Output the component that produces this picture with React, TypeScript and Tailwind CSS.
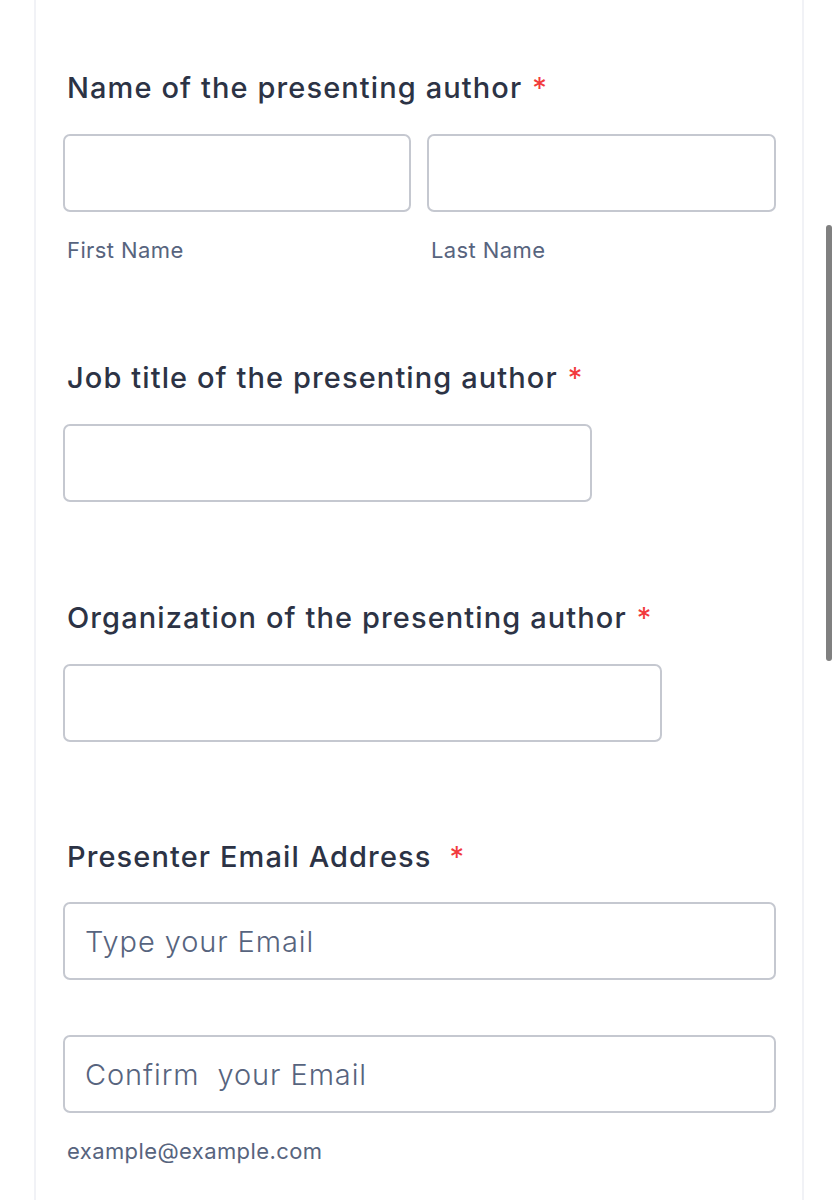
import React from "react";

const font = { fontFamily: "Inter, 'Noto Sans', sans-serif" };

function Label({ text, gap = "ml-[10px]" }: { text: string; gap?: string }) {
  return (
    <div className="pl-[4px] text-[29px] leading-[36px] text-[#2c3345] font-medium tracking-[1.1px]">
      {text}
      <span className={`${gap} text-[#f23a3c] font-normal`}>*</span>
    </div>
  );
}

function Input({ w, placeholder }: { w: string; placeholder?: string }) {
  return (
    <input
      placeholder={placeholder}
      className={`${w} h-[78px] border-2 border-[#c5c8d0] rounded-[7px] bg-white px-[20px] text-[29px] font-light tracking-[0.9px] text-[#2c3345] placeholder:text-[#57647e] outline-none`}
      style={font}
    />
  );
}

function Sub({ text, className = "" }: { text: string; className?: string }) {
  return (
    <div className={`pl-[4px] text-[22px] leading-[26px] tracking-[0.4px] text-[#57647e] ${className}`}>{text}</div>
  );
}

export default function App() {
  return (
    <div className="w-[838px] h-[1200px] bg-white overflow-hidden relative" style={font}>
      <div className="ml-[34px] w-[770px] h-[1200px] border-x-2 border-[#f1f2f6] bg-white">
        <div className="pl-[27px]">
          <div className="pt-[70px]">
            <Label text="Name of the presenting author" />
            <div className="mt-[28px] flex gap-[16px]">
              <div className="flex flex-col">
                <Input w="w-[348px]" />
                <Sub text="First Name" className="mt-[25px]" />
              </div>
              <div className="flex flex-col">
                <Input w="w-[349px]" />
                <Sub text="Last Name" className="mt-[25px]" />
              </div>
            </div>
          </div>
          <div className="pt-[97px]">
            <Label text="Job title of the presenting author" />
            <div className="mt-[28px]">
              <Input w="w-[529px]" />
            </div>
          </div>
          <div className="pt-[98px]">
            <Label text="Organization of the presenting author" />
            <div className="mt-[28px]">
              <Input w="w-[599px]" />
            </div>
          </div>
          <div className="pt-[97px]">
            <Label text="Presenter Email Address" gap="ml-[18px]" />
            <div className="mt-[27px]">
              <Input w="w-[713px]" placeholder="Type your Email" />
            </div>
            <div className="mt-[55px]">
              <Input w="w-[713px]" placeholder="Confirm  your Email" />
            </div>
            <Sub text="example@example.com" className="mt-[25px]" />
          </div>
        </div>
      </div>
      <div className="absolute left-[826px] top-[225px] w-[6px] h-[436px] rounded-full bg-[#808080]" />
    </div>
  );
}
